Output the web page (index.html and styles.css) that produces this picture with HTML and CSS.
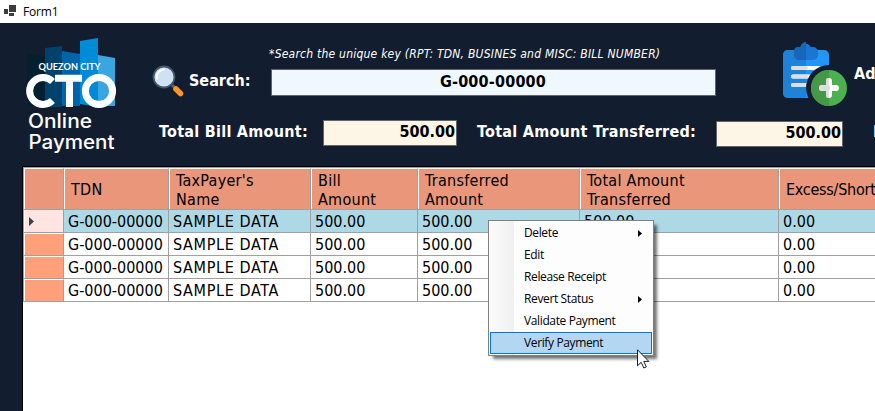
FILE: index.html
```html
<!DOCTYPE html>
<html lang="en">
<head>
<meta charset="utf-8">
<title>Form1</title>
<link rel="stylesheet" href="styles.css">
</head>
<body>
<header class="titlebar">
  <svg class="app-icon" width="12" height="11" viewBox="0 0 12 11" fill="#3c3c3c"><path d="M0 4h4v5H0zM5 0h7v7H5zM5 8h5v3H5z"/></svg>
  <span>Form1</span>
</header>
<main class="form">
  <section class="top">
    <svg class="logo" width="94" height="122" viewBox="0 0 94 122">
      <path fill="#022030" d="M2 16l18 2v50H2z"/>
      <path fill="#00426c" d="M20 10l17-2v61H20z"/>
      <path fill="#0065a8" d="M37 13l18 3v52H37z"/>
      <path fill="#008bd8" d="M55 3l18-3v69l-18-3z"/>
      <path fill="#3ba5df" d="M73 17l17 3v48H73z"/>
      <text class="logo-city" x="13.500" y="32" textLength="62" lengthAdjust="spacingAndGlyphs">QUEZON CITY</text>
      <g fill="none" stroke="#fff" stroke-width="7">
        <path d="M27.500 43.500A13.400 13.400 0 1 0 27.500 62.500"/>
        <path d="M30 40.200h27M44.500 40v29"/>
        <circle cx="74" cy="53" r="13.600"/>
      </g>
      <text class="logo-sub" x="3" y="90" textLength="64" lengthAdjust="spacingAndGlyphs">Online</text>
      <text class="logo-sub" x="3.500" y="110.500" textLength="86" lengthAdjust="spacingAndGlyphs">Payment</text>
    </svg>
    <div class="fields">
      <p class="hint">*Search the unique key (RPT: TDN, BUSINES and MISC: BILL NUMBER)</p>
      <div class="search-row">
        <svg class="lens" width="34" height="34" viewBox="0 0 34 34">
          <path d="M20 20l4 4" stroke="#586575" stroke-width="3"/>
          <path d="M24 24l4.500 4.500" stroke="#ff9529" stroke-width="5.500" stroke-linecap="round"/>
          <circle cx="12" cy="12" r="10.500" fill="#cfe1f2" stroke="#43566b" stroke-width="1.800"/>
          <path d="M5 13.500a7.500 7.500 0 0 1 7-9" fill="none" stroke="#fff" stroke-width="2" stroke-linecap="round"/>
        </svg>
        <label class="label search-label">Search:</label>
        <div class="box search-box">G-000-00000</div>
      </div>
      <div class="totals-row">
        <label class="label bill-label">Total Bill Amount:</label>
        <div class="box amount bill-box">500.00</div>
        <label class="label transfer-label">Total Amount Transferred:</label>
        <div class="box amount transfer-box">500.00</div>
        <label class="label excess-label">E</label>
      </div>
    </div>
    <div class="add">
      <svg width="66" height="66" viewBox="0 0 66 66">
        <rect x="1" y="8" width="46" height="48" rx="5" fill="#2196f3"/>
        <path fill="#1e83d8" d="M6 8h18v48H6a5 5 0 0 1-5-5V13a5 5 0 0 1 5-5z"/>
        <path fill="#1976d2" d="M16 5h2.500a5.500 5.500 0 0 1 10 0H31a5 5 0 0 1 5 5v3a5 5 0 0 1-5 5H17a5 5 0 0 1-5-5v-3a5 5 0 0 1 4-5z"/>
        <path fill="#1767b9" d="M16 5h2.500a5.500 5.500 0 0 1 5.500-5v18h-7a5 5 0 0 1-5-5v-3a5 5 0 0 1 4-5z"/>
        <path d="M11 26h26M11 34.500h20M11 43h16" stroke="#fff" stroke-width="4" stroke-linecap="round"/>
        <path d="M11 26h13M11 34.500h13M11 43h13" stroke="#dedede" stroke-width="4" stroke-linecap="round"/>
        <circle cx="47" cy="46" r="23" fill="#121e2f"/>
        <circle cx="47" cy="46" r="18" fill="#4caf50"/>
        <path fill="#449848" d="M47 28a18 18 0 0 0 0 36z"/>
        <path d="M40 46h14M47 39v14" stroke="#fff" stroke-width="6" stroke-linecap="round"/>
        <path d="M40 46h5" stroke="#dedede" stroke-width="6" stroke-linecap="round"/>
        <path fill="#dedede" d="M44 39a3 3 0 0 1 3-3v20a3 3 0 0 1-3-3z"/>
      </svg>
      <span class="label add-label">Ad</span>
    </div>
  </section>
  <section class="grid">
    <div class="row head">
      <div class="corner"></div><div>TDN</div><div>TaxPayer's<br>Name</div><div>Bill<br>Amount</div><div>Transferred<br>Amount</div><div>Total Amount<br>Transferred</div><div class="excess">Excess/Short</div>
    </div>
    <div class="row selected"><div class="mark"><svg width="5" height="9" viewBox="0 0 5 9"><path d="M0 0l5 4.500L0 9z" fill="#404048"/></svg></div><div>G-000-00000</div><div class="name">SAMPLE DATA</div><div>500.00</div><div>500.00</div><div>500.00</div><div>0.00</div></div>
    <div class="row"><div class="mark"></div><div>G-000-00000</div><div class="name">SAMPLE DATA</div><div>500.00</div><div>500.00</div><div></div><div>0.00</div></div>
    <div class="row"><div class="mark"></div><div>G-000-00000</div><div class="name">SAMPLE DATA</div><div>500.00</div><div>500.00</div><div></div><div>0.00</div></div>
    <div class="row"><div class="mark"></div><div>G-000-00000</div><div class="name">SAMPLE DATA</div><div>500.00</div><div>500.00</div><div></div><div>0.00</div></div>
  </section>
</main>
<nav class="menu">
  <div class="item">Delete<svg width="4" height="7" viewBox="0 0 4 7"><path d="M0 0l4 3.500L0 7z"/></svg></div>
  <div class="item">Edit</div>
  <div class="item">Release Receipt</div>
  <div class="item">Revert Status<svg width="4" height="7" viewBox="0 0 4 7"><path d="M0 0l4 3.500L0 7z"/></svg></div>
  <div class="item">Validate Payment</div>
  <div class="item active">Verify Payment</div>
</nav>
<svg class="cursor" width="13" height="20" viewBox="0 0 13 20"><path d="M.5.800v16l3.700-3.500 2.600 5.700 2.500-1.100-2.500-5.500h5z" fill="#fff" stroke="#1b1b2b"/></svg>
</body>
</html>
```
FILE: styles.css
```css
* { box-sizing: border-box; }
body {
  margin: 0;
  width: 875px;
  height: 411px;
  overflow: hidden;
  position: relative;
  background: #fff;
  font-family: "DejaVu Sans Condensed", "DejaVu Sans", sans-serif;
  font-stretch: condensed;
  color: #000;
}
svg { display: block; flex: none; }
.titlebar {
  height: 23px;
  display: flex;
  align-items: center;
  gap: 7px;
  padding-left: 4px;
  font: 12px "Open Sans", sans-serif;
  letter-spacing: -0.200px;
}
.app-icon { margin-top: -2px; }
.form {
  height: 388px;
  background: #121e2f;
  display: flex;
  flex-direction: column;
}
.top { height: 143px; display: flex; flex: none; }
.logo { margin: 15px 0 0 25px; }
.logo-city { font: bold 8.500px "Lato", sans-serif; fill: #fff; }
.logo-sub { font: 500 19.500px "Inter", sans-serif; fill: #fff; }
.fields { width: 661px; flex: none; }
.hint {
  margin: 23px 0 0 150px;
  height: 16px;
  font-size: 12px;
  line-height: 16px;
  font-style: italic;
  color: #fff;
  white-space: nowrap;
  letter-spacing: 0.230px;
}
.label {
  color: #fff;
  font-size: 16px;
  font-weight: bold;
  line-height: 24px;
  white-space: nowrap;
  flex: none;
}
.search-row { display: flex; height: 34px; margin-top: 3px; padding-left: 33px; }
.search-label { width: 82px; margin-left: 3px; padding-top: 4px; }
.box {
  border: 1px solid #646464;
  font-size: 16px;
  font-weight: bold;
  line-height: 22px;
  flex: none;
}
.search-box {
  width: 445px;
  height: 27px;
  margin-top: 4px;
  padding-right: 1px;
  background: #f0f8ff;
  text-align: center;
  line-height: 23px;
  letter-spacing: .200px;
}
.totals-row { display: flex; margin-top: 21px; padding-left: 40px; }
.totals-row .label { letter-spacing: .270px; }
.bill-label { width: 164px; }
.amount { height: 26px; background: #fdf5e6; text-align: right; padding-right: 1px; }
.bill-box { width: 134px; }
.transfer-label { width: 239px; margin-left: 20px; }
.transfer-box { width: 127px; margin-top: 1px; }
.totals-row .excess-label { margin-left: 30px; width: 3px; overflow: hidden; }
.add { display: flex; margin-top: 19px; margin-left: 2px; width: 93px; overflow: hidden; flex: none; }
.add-label { margin-left: 6px; margin-top: 20px; width: 21px; overflow: hidden; }
.grid {
  flex: 1;
  margin-left: 22px;
  border-left: 1px solid #000;
  border-top: 1px solid #000;
  background: #fff;
  overflow: hidden;
}
.row {
  display: grid;
  grid-template-columns: 40px 105px 142px 107px 162px 199px minmax(0, 1fr);
  height: 23px;
  font-size: 16px;
  line-height: 24px;
  white-space: nowrap;
  border-left: 1px solid #a0a0a0;
}
.row > div {
  border-right: 1px solid #a0a0a0;
  border-bottom: 1px solid #a0a0a0;
  padding-left: 4px;
  overflow: hidden;
}
.row > div:last-child { border-right: 0; }
.row > .name { letter-spacing: .650px; }
.row > .mark {
  background: #ffa07a;
  border-top: 1px solid #fff;
  box-shadow: inset 1px 0 #fff;
  display: flex;
  align-items: center;
}
.selected > div { background: #add8e6; }
.selected > .mark { background: #ffe4e1; border-top: 0; padding-left: 5px; }
.head { height: 43px; border-top: 1px solid #a0a0a0; line-height: 19px; letter-spacing: .280px; }
.head > div {
  background: #e9967a;
  border-top: 1px solid #fff;
  box-shadow: inset 1px 0 #fff;
  padding-left: 7px;
  padding-top: 1px;
  display: flex;
  align-items: center;
}
.head > .excess { letter-spacing: -.250px; }
.menu {
  position: absolute;
  left: 488px;
  top: 220px;
  width: 166px;
  height: 136px;
  border: 1px solid #808080;
  padding: 1px;
  background: linear-gradient(90deg, #fcfcfc, #f0f0f0 25px, #fdfdfd 25px);
  box-shadow: 4px 4px 3px -1px rgba(0, 0, 0, .55);
  font: 12px "Open Sans", sans-serif;
  letter-spacing: -.370px;
}
.item {
  height: 22px;
  display: flex;
  align-items: center;
  justify-content: space-between;
  padding: 0 9px 1px 33px;
  border: 1px solid transparent;
}
.item svg { margin-top: 1px; }
.active { background: #b3d7f3; border-color: #0078d7; }
.cursor { position: absolute; left: 637px; top: 349px; }
```
